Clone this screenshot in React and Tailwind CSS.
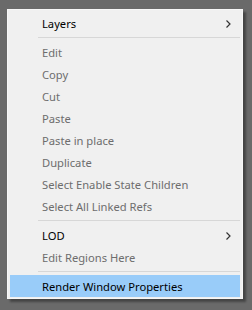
import React from 'react';

const ITEMS = [
  { label: 'Layers', sub: true },
  { sep: true },
  { label: 'Edit', disabled: true },
  { label: 'Copy', disabled: true },
  { label: 'Cut', disabled: true },
  { label: 'Paste', disabled: true },
  { label: 'Paste in place', disabled: true },
  { label: 'Duplicate', disabled: true },
  { label: 'Select Enable State Children', disabled: true },
  { label: 'Select All Linked Refs', disabled: true },
  { sep: true },
  { label: 'LOD', sub: true },
  { label: 'Edit Regions Here', disabled: true },
  { sep: true },
  { label: 'Render Window Properties', active: true },
];

const Chevron = () => (
  <svg width="5" height="8" viewBox="0 0 5 8" className="shrink-0">
    <path d="M0.5 0.5 L4 4 L0.5 7.5" fill="none" stroke="#333" strokeWidth="1.2" />
  </svg>
);

export default function App() {
  return (
    <div
      className="w-[252px] h-[310px] bg-[#6a6a6a] pl-[7px] pt-[9px]"
      style={{ fontFamily: '"Noto Sans", "Liberation Sans", sans-serif' }}
    >
      <div className="w-[236px] h-[290px] bg-[#f0f0f0] border border-[#f7f7f7] px-[2px] pt-[2px] pb-[1px] flex flex-col shadow-[3px_3px_2px_rgba(0,0,0,0.35)]">
        {ITEMS.map((item, i) =>
          item.sep ? (
            <div key={i} className="h-[7px] flex items-center pl-[28px]">
              <div className="h-px w-full bg-[#d7d7d7]" />
            </div>
          ) : (
            <div
              key={i}
              className={`h-[22px] flex items-center justify-between pl-[32px] pr-[9px] pt-px text-[11.2px] leading-none ${
                item.active ? 'bg-[#99ccf9] text-black' : item.disabled ? 'text-[#6d6d6d]' : 'text-black'
              }`}
            >
              <span>{item.label}</span>
              {item.sub && <Chevron />}
            </div>
          )
        )}
      </div>
    </div>
  );
}
